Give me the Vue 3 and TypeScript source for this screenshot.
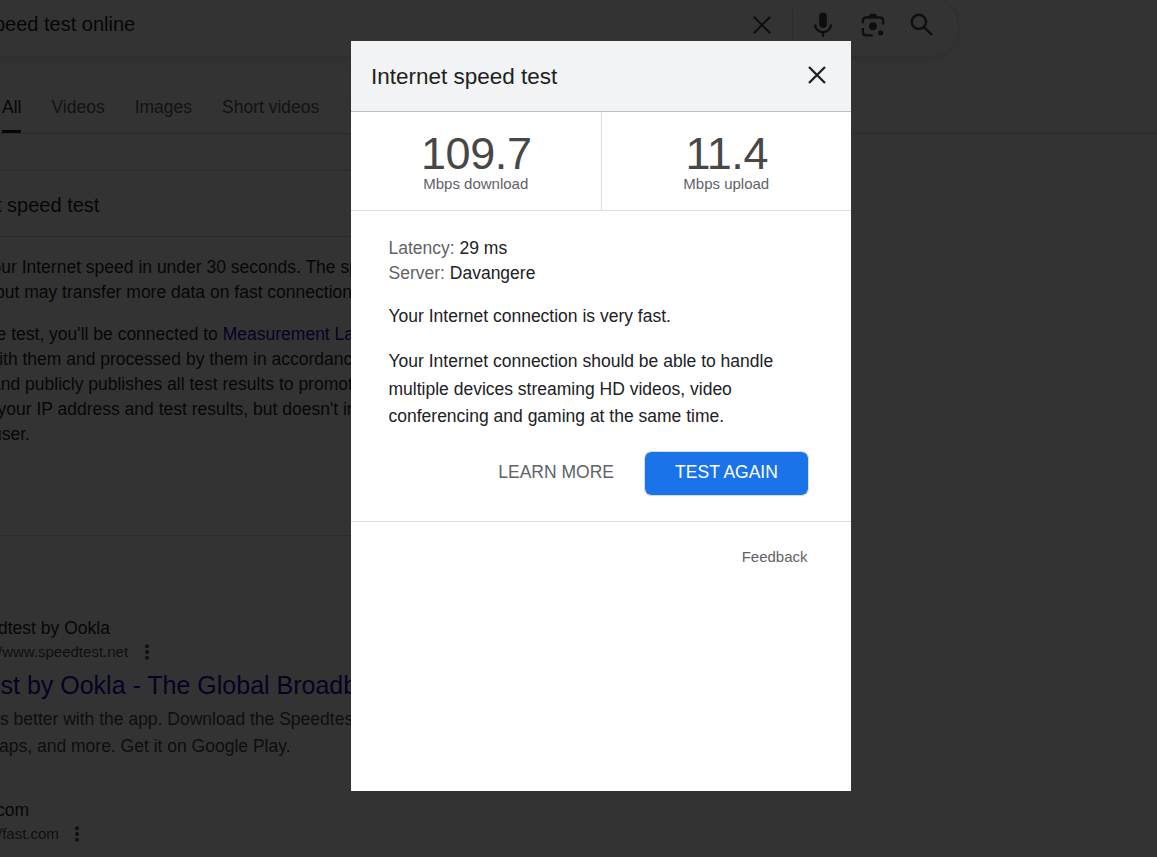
<script setup lang="ts">
interface Line { text: string; x: number; link?: string }

const tabs = ['All', 'Videos', 'Images', 'Short videos', 'Shopping']

const intro: Line[][] = [
  [
    { text: 'our Internet speed in under 30 seconds. The speed', x: -8.5 },
    { text: 'but may transfer more data on fast connections.', x: -5 },
  ],
  [
    { text: 'the test, you\'ll be connected to ', x: -18, link: 'Measurement Lab' },
    { text: 'with them and processed by them in accordance', x: -13.5 },
    { text: 'and publicly publishes all test results to promote', x: -9 },
    { text: 'your IP address and test results, but doesn\'t include', x: -2.5 },
    { text: 'user.', x: -8 },
  ],
]

const metrics = [
  { value: '109.7', label: 'Mbps download' },
  { value: '11.4', label: 'Mbps upload' },
]
</script>

<template>
  <div class="screen">
    <div class="page">
      <header class="search">
        <span class="query">speed test online</span>
        <div class="tools">
          <svg class="clear" viewBox="0 0 20 20"><path d="M1.8 1.8 18.2 18.2M18.2 1.8 1.8 18.2" /></svg>
          <i class="bar"></i>
          <svg class="mic" viewBox="0 0 24 24">
            <path d="M12 14.4c1.75 0 3.1-1.31 3.1-2.97V5a3.1 3.1 0 0 0-6.2 0v6.43c0 1.66 1.35 2.97 3.1 2.97z" />
            <path d="M17.4 11.6h1.8c0 3.6-2.6 6.4-6.3 6.9v2.9h-1.8v-2.9c-3.7-.5-6.3-3.3-6.3-6.9h1.8c0 3 2.4 5.2 5.4 5.2s5.4-2.2 5.4-5.2z" />
          </svg>
          <svg class="lens" viewBox="0 0 24 24">
            <path class="ring" d="M3.9 10.5V8.7c0-1.7 1-2.7 2.7-2.7h10.8c1.7 0 2.7 1 2.7 2.7v2.8M3.9 14.3v3.3c0 1.7 1 2.7 2.7 2.7h5.2" />
            <path d="M8.7 5.5 9.4 3h5.2l.7 2.5z" /><circle cx="12" cy="12.9" r="3.2" /><circle cx="18.2" cy="18.2" r="2.1" />
          </svg>
          <svg class="find" viewBox="0 0 24 24">
            <circle class="ring" cx="9.5" cy="9.5" r="5.7" /><path class="ring" d="m13.7 13.7 6.2 6.2" />
          </svg>
        </div>
      </header>
      <nav class="tabs">
        <span v-for="(tab, i) in tabs" :key="tab" class="tab" :class="{ active: i === 0 }">{{ tab }}</span>
      </nav>
      <main class="results">
        <section class="card">
          <h2>t speed test</h2>
          <div class="intro">
            <p v-for="(para, i) in intro" :key="i">
              <span v-for="line in para" :key="line.text" class="line" :style="{ marginLeft: line.x + 'px' }">{{ line.text }}<a v-if="line.link">{{ line.link }}</a></span>
            </p>
          </div>
        </section>
        <article class="hit">
          <div class="site first">dtest by Ookla</div>
          <div class="url"><span class="u1">/www.speedtest.net</span><svg viewBox="0 0 6 16"><circle cx="3" cy="2.2" r="2" /><circle cx="3" cy="8" r="2" /><circle cx="3" cy="13.8" r="2" /></svg></div>
          <h3>st by Ookla - The Global Broadband</h3>
          <div class="desc">s better with the app. Download the Speedtest</div>
          <div class="desc more">aps, and more. Get it on Google Play.</div>
        </article>
        <article class="hit">
          <div class="site second">com</div>
          <div class="url"><span class="u2">/fast.com</span><svg viewBox="0 0 6 16"><circle cx="3" cy="2.2" r="2" /><circle cx="3" cy="8" r="2" /><circle cx="3" cy="13.8" r="2" /></svg></div>
        </article>
      </main>
    </div>
    <div class="overlay">
      <div class="dialog">
        <div class="head">
          <h1>Internet speed test</h1>
          <svg viewBox="0 0 20 20"><path d="M2 2 18 18M18 2 2 18" /></svg>
        </div>
        <div class="metrics">
          <div v-for="m in metrics" :key="m.label" class="metric">
            <div class="value">{{ m.value }}</div>
            <div class="label">{{ m.label }}</div>
          </div>
        </div>
        <div class="body">
          <div class="fact">Latency: <b>29 ms</b></div>
          <div class="fact">Server: <b>Davangere</b></div>
          <p class="summary">Your Internet connection is very fast.</p>
          <p class="detail">Your Internet connection should be able to handle<br>multiple devices streaming HD videos, video<br>conferencing and gaming at the same time.</p>
          <div class="actions">
            <span class="learn">LEARN MORE</span>
            <button>TEST AGAIN</button>
          </div>
        </div>
        <div class="feedback">Feedback</div>
      </div>
    </div>
  </div>
</template>

<style>
body { margin: 0; background: #fff; }
</style>
<style scoped>
* { box-sizing: border-box; }
.screen { position: relative; width: 1157px; height: 857px; overflow: hidden; font: 17.5px/25px "Liberation Sans", Arial, sans-serif; color: #1f1f1f; }
h1, h2, h3, p { margin: 0; font-weight: 400; }
.page { height: 857px; overflow: hidden; }
.search { height: 60px; width: 1019px; margin: -3px 0 0 -60px; border: 1px solid #dfe1e5; border-radius: 30px; box-shadow: 0 3px 10px rgba(32, 33, 36, .1); display: flex; justify-content: space-between; }
.query { font-size: 20px; line-height: 24px; margin: 14px 0 0 43px; white-space: nowrap; }
.tools { display: flex; align-items: center; height: 54px; margin-right: 21px; fill: #474747; }
.tools svg { width: 30px; height: 30px; }
.tools .clear { width: 20px; height: 20px; fill: none; stroke: #474747; stroke-width: 2.2; }
.bar { width: 1px; height: 40px; margin: 8px 15px 0 20px; background: #dadce0; }
.lens, .find { margin-left: 20px; }
.tools .find { margin-left: 19px; }
.ring { fill: none; stroke: #474747; stroke-width: 1.9; }
.tabs { height: 77px; border-bottom: 1px solid #d2d2d2; display: flex; gap: 30px; padding: 25px 0 0 2px; line-height: 50px; white-space: nowrap; color: #5e5e5e; }
.tab { height: 51px; }
.active { color: #1f1f1f; border-bottom: 3px solid #1f1f1f; }
.results { width: 351px; overflow: hidden; padding-top: 36px; }
.card { height: 366px; border-top: 1px solid #dadce0; border-bottom: 1px solid #dadce0; }
h2 { height: 66px; padding-top: 22px; text-indent: -4px; font-size: 20px; border-bottom: 1px solid #dadce0; }
.intro { padding-top: 18px; }
.intro p { margin-bottom: 17px; }
.line { display: block; width: max-content; white-space: pre; }
a { color: #1a0dab; }
.hit { white-space: nowrap; }
.site { line-height: 25px; }
.first { padding-top: 80px; text-indent: -2px; }
.second { padding-top: 38px; text-indent: -4px; }
.url { height: 24px; display: flex; align-items: center; font-size: 15px; color: #4d5156; padding-bottom: 4px; }
.u1 { margin-left: -2px; }
.u2 { margin-left: -2px; }
.url svg { width: 6px; height: 16px; margin: 2px 0 0 16px; fill: #4d5156; }
.second + .url svg { margin-left: 15px; }
h3 { color: #1a0dab; font-size: 25px; line-height: 32px; margin: 4px 0 5px; text-indent: .5px; }
.desc { color: #474747; line-height: 27px; }
.more { text-indent: -1px; }
.overlay { position: absolute; inset: 0; background: rgba(0, 0, 0, .8); display: flex; align-items: flex-start; padding: 41px 0 0 351px; }
.dialog { width: 500px; height: 750px; background: #fff; }
.head { height: 71px; background: #f1f3f4; border-bottom: 1px solid #bdc1c6; display: flex; align-items: center; justify-content: space-between; padding: 0 24px 1px 20px; }
h1 { font-size: 22.5px; line-height: 30px; padding-top: 3px; }
.head svg { width: 20px; height: 20px; margin-bottom: 2px; stroke: #1f1f1f; stroke-width: 2.3; fill: none; }
.metrics { height: 99px; display: flex; border-bottom: 1px solid #dadce0; }
.metric { width: 250px; text-align: center; padding-top: 20px; color: #474747; }
.metric:first-child { width: 251px; border-right: 1px solid #dadce0; }
.value { font-size: 45px; line-height: 44px; letter-spacing: -.4px; padding-left: 1px; }
.label { font-size: 15px; line-height: 16px; color: #5f6368; }
.body { height: 311px; border-bottom: 1px solid #dadce0; padding: 25px 42px 0 37.5px; color: #202124; }
.fact { color: #5f6368; }
.fact b { color: #202124; font-weight: 400; }
.summary { margin-top: 18px; }
.detail { margin-top: 19px; line-height: 27.5px; white-space: nowrap; }
.actions { display: flex; justify-content: flex-end; align-items: center; gap: 30px; margin-top: 20px; }
.learn { color: #5f6368; padding-bottom: 2px; }
button { width: 165px; height: 45px; border: 1px solid #dadce0; border-radius: 7px; background: #1a73e8; background-clip: padding-box; color: #fff; font: inherit; padding: 0 0 2px; }
.feedback { text-align: right; padding: 22px 43.5px 0 0; font-size: 15px; color: #5f6368; }
</style>
